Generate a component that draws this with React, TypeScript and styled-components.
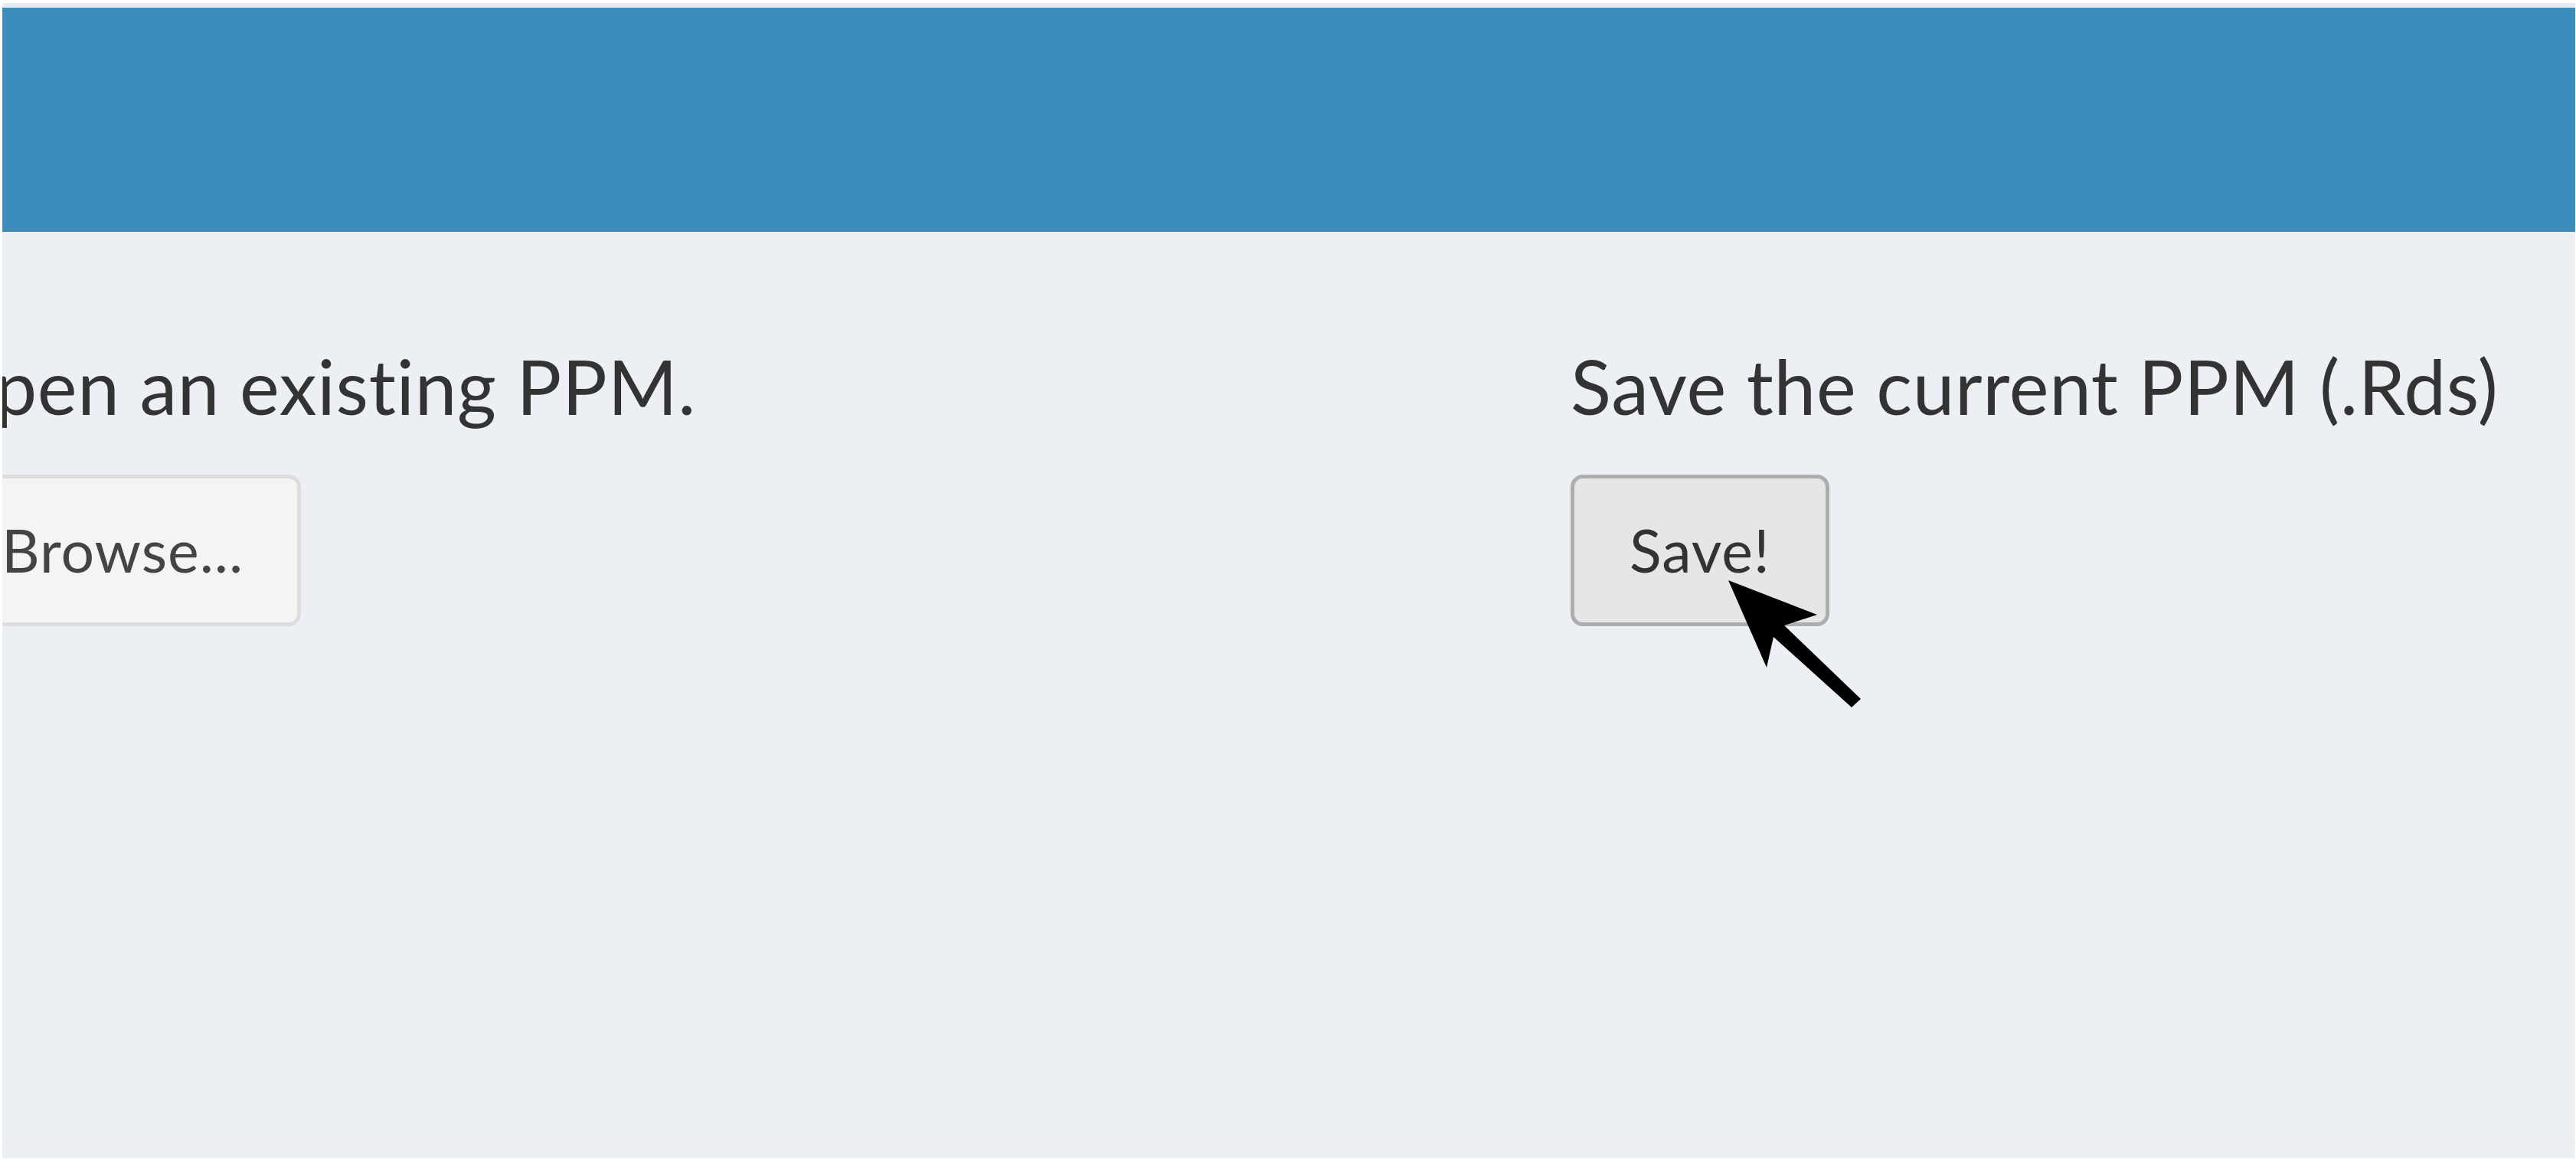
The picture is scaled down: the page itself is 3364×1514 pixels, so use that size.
import React from "react";
import styled, { createGlobalStyle } from "styled-components";

const GlobalStyle = createGlobalStyle`
  html, body {
    margin: 0;
    padding: 0;
    background: #ffffff;
    overflow: hidden;
  }
  #root {
    height: 100vh;
  }
  *, *::before, *::after {
    box-sizing: border-box;
  }
`;

const Frame = styled.div`
  height: 100%;
  padding: 4px 1px 1px 3px;
  display: flex;
  flex-direction: column;
`;

const TopStrip = styled.div`
  flex: none;
  height: 6px;
  background: #e9eaf0;
`;

const Header = styled.header`
  flex: none;
  height: 293px;
  background: #3c8dbc;
`;

const Content = styled.main`
  flex: 1;
  display: flex;
  flex-direction: column;
  overflow: hidden;
  background: #ecf0f5;
  color: #333333;
  font-family: Lato, "Open Sans", "Noto Sans", sans-serif;
  font-variant-ligatures: none;
`;

const Body = styled.div`
  flex: 1;
  padding-top: 143px;
`;

const Row = styled.div`
  display: flex;
  margin-left: -76px;
`;

const Column = styled.div<{ $width?: number }>`
  flex: ${(p) => (p.$width ? `0 0 ${p.$width}px` : "1 1 auto")};
  display: flex;
  flex-direction: column;
  align-items: flex-start;
`;

const Label = styled.label<{ $indent?: number }>`
  display: block;
  font-size: 98px;
  line-height: 1.2;
  font-weight: 400;
  letter-spacing: 0.7px;
  white-space: nowrap;
  margin: 0 0 56px ${(p) => p.$indent ?? 0}px;
`;

const ButtonWrap = styled.div`
  position: relative;
`;

const Button = styled.button<{ $hover?: boolean }>`
  height: 198px;
  padding: 0 ${(p) => (p.$hover ? 72 : 70)}px;
  display: flex;
  align-items: center;
  font-family: Lato, "Open Sans", "Noto Sans", sans-serif;
  font-variant-ligatures: none;
  font-size: 77px;
  line-height: 1.2;
  letter-spacing: 1px;
  color: ${(p) => (p.$hover ? "#333333" : "#444444")};
  background: ${(p) => (p.$hover ? "#e6e6e6" : "#f4f4f4")};
  border: 5px solid ${(p) => (p.$hover ? "#adadad" : "#dddddd")};
  border-radius: 16px;
  white-space: nowrap;
  cursor: pointer;
`;

const Pointer = styled.svg`
  position: absolute;
  left: 205px;
  top: 137px;
  width: 176px;
  height: 169px;
  pointer-events: none;
`;

const Footer = styled.div`
  flex: none;
  height: 25px;
  border-top: 7px solid #eeedf0;
`;

export default function App() {
  return (
    <>
      <GlobalStyle />
      <Frame>
        <TopStrip />
        <Header />
        <Content>
          <Body>
            <Row>
              <Column $width={2124}>
                <Label $indent={-12}>Open an existing PPM.</Label>
                <Button type="button">Browse...</Button>
              </Column>
              <Column>
                <Label>Save the current PPM (.Rds)</Label>
                <ButtonWrap>
                  <Button type="button" $hover>
                    Save!
                  </Button>
                  <Pointer viewBox="0 0 176 169" aria-hidden="true">
                    <polygon
                      points="1,1 117,46 74,60 174,156 162,167 60,75 51,115"
                      fill="#000000"
                    />
                  </Pointer>
                </ButtonWrap>
              </Column>
            </Row>
          </Body>
          <Footer />
        </Content>
      </Frame>
    </>
  );
}
